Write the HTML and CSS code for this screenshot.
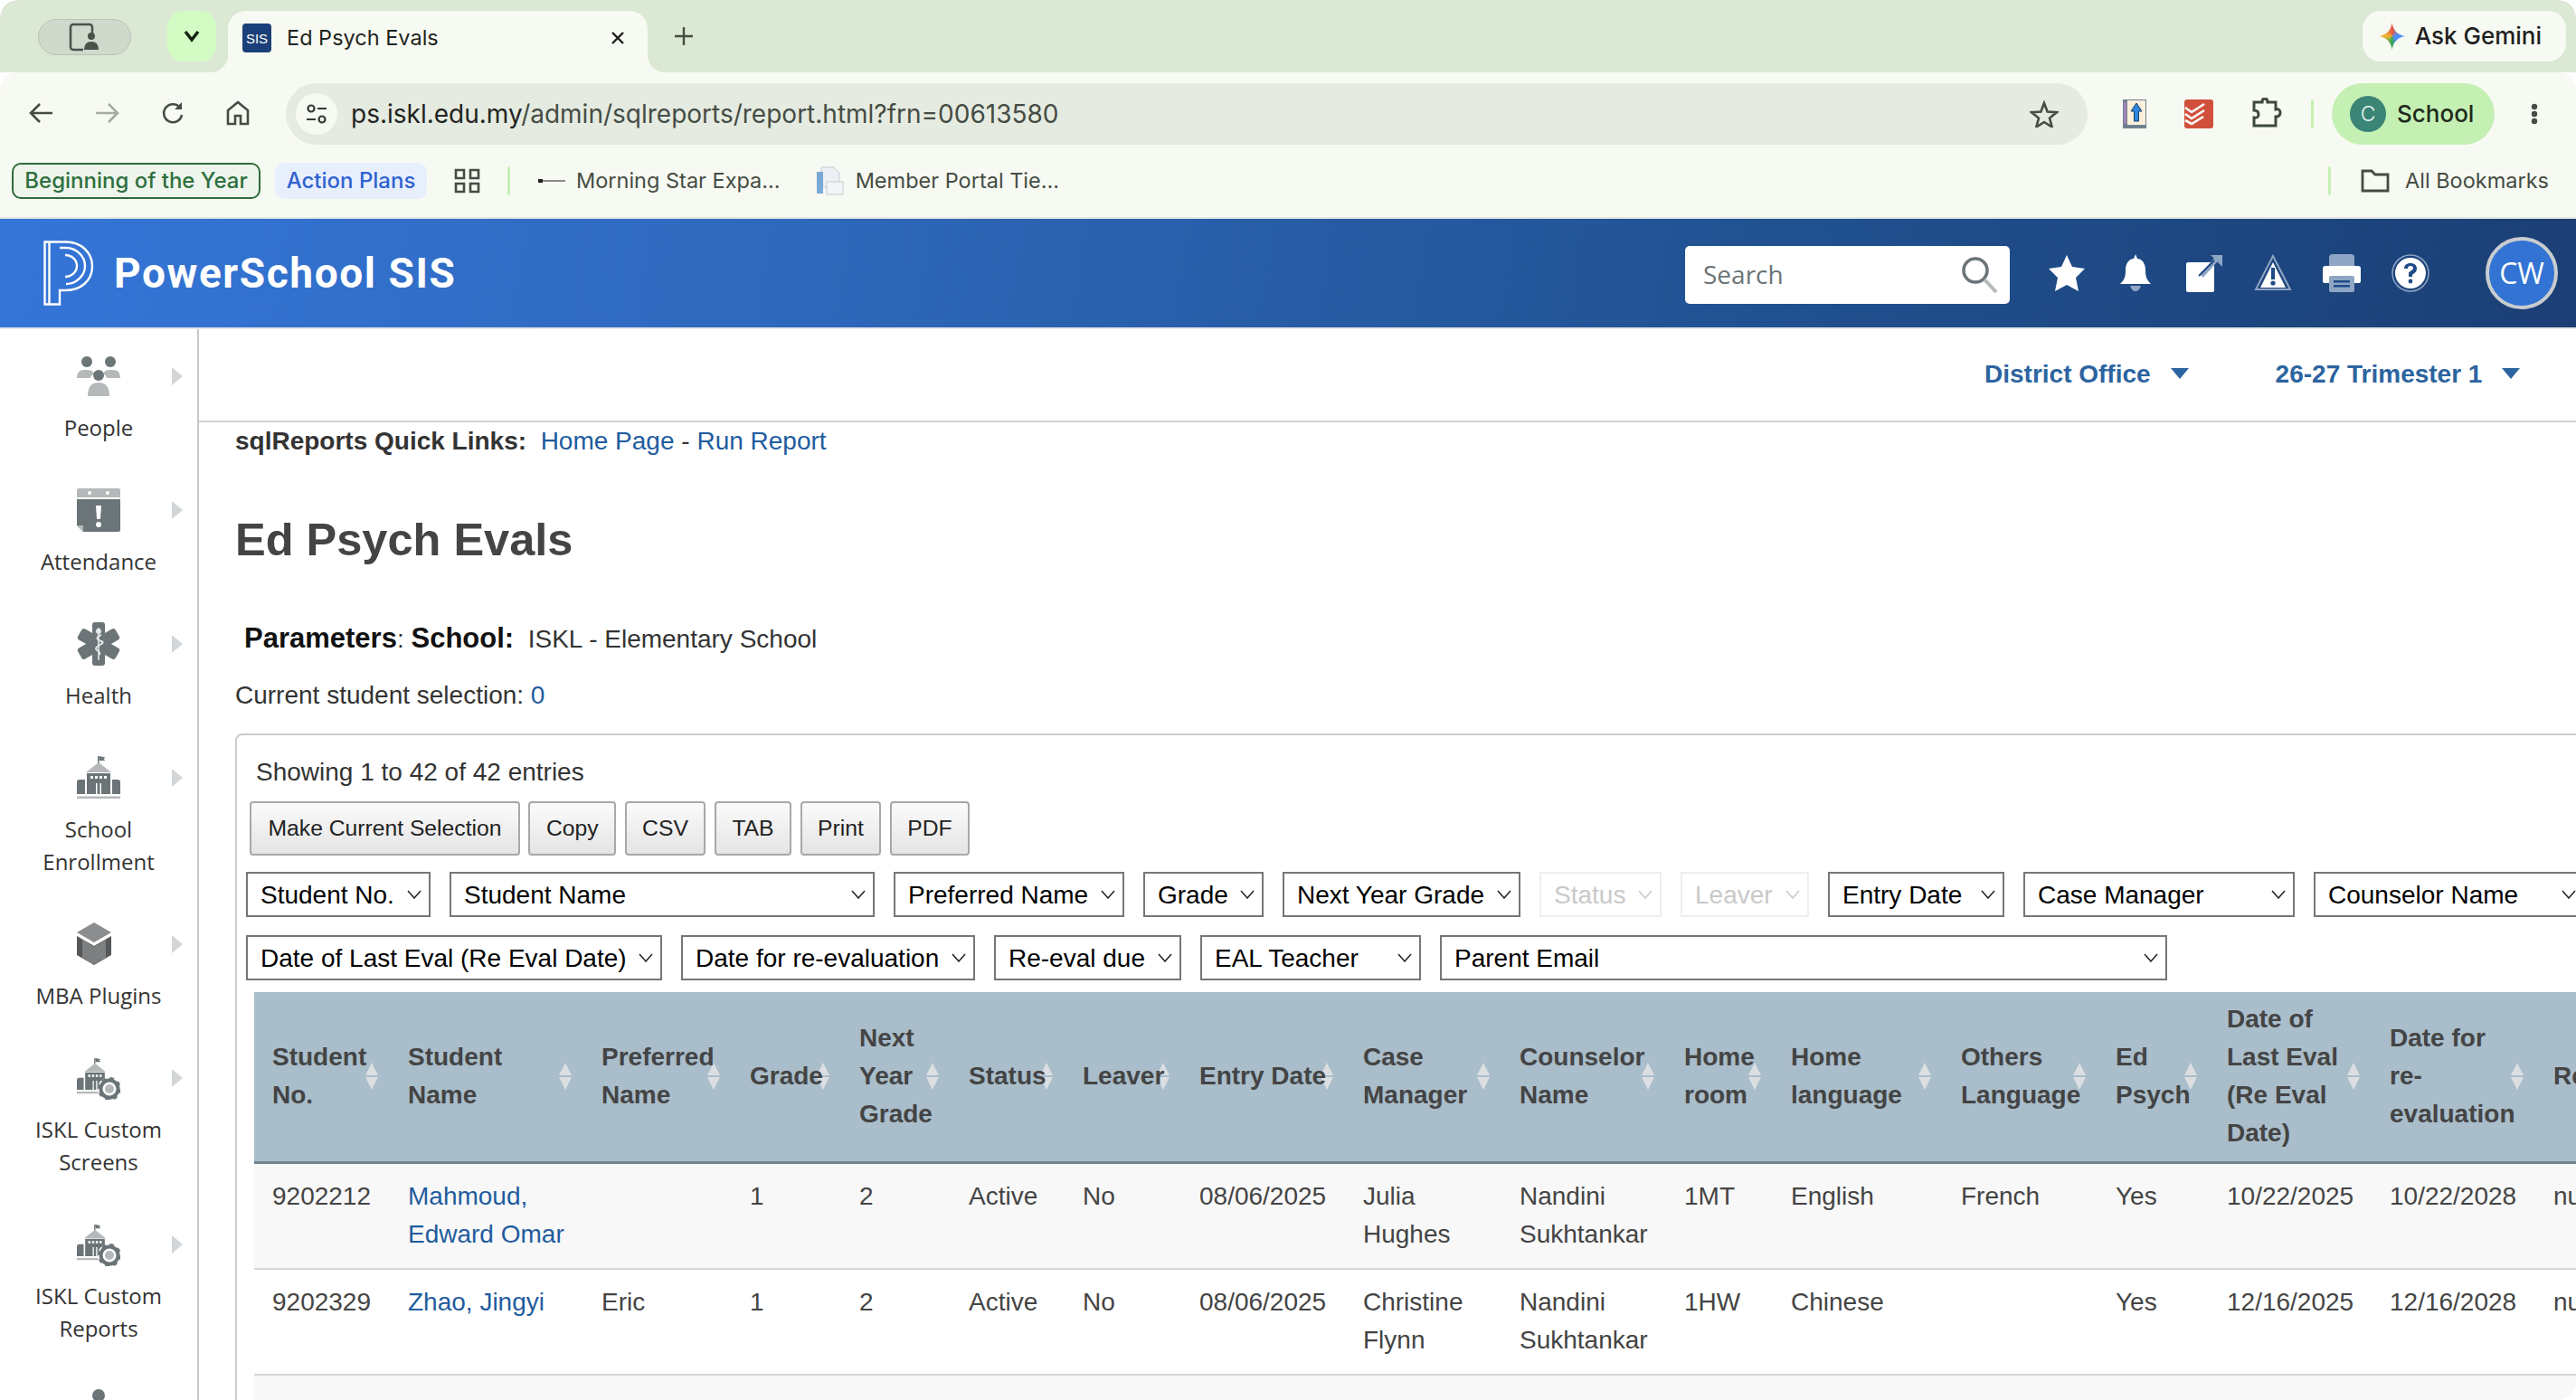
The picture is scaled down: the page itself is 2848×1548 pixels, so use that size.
FILE: index.html

```html
<!DOCTYPE html>
<html lang="en">
<head>
  <meta charset="UTF-8">
  <title>Ed Psych Evals</title>
  <link rel="stylesheet" href="styles.css">
</head>
<body>
<svg class="defs" width="0" height="0">
  <symbol id="school" viewBox="0 0 48 48">
    <path d="M23 0h1.500v8H23z" fill="#6b7477"/>
    <path d="M24.500 0l7 1.500-2 1.500 2 2h-7z" fill="#6b7477"/>
    <path d="M24 7l14 11H10z" fill="#b5b9ba"/>
    <path d="M11 19h26v23H27V30h-6v12H11z" fill="#6b7477"/>
    <path d="M15 22h3v3h-3zM20 22h3v3h-3zM25 22h3v3h-3zM30 22h3v3h-3z" fill="#fff"/>
    <path d="M22.500 29h3v13h-3z" fill="#6b7477"/>
    <path d="M3 26h6v16H0V29q0-3 3-3zM39 26h6q3 0 3 3v13h-9z" fill="#6b7477"/>
    <path d="M0 44.500h48V47H0z" fill="#b5b9ba"/>
  </symbol>
  <symbol id="school-gear" viewBox="0 0 48 48">
    <use href="#school" width="40" height="44" x="0" y="0"/>
    <circle cx="36" cy="36" r="13" fill="#fff"/>
    <circle cx="36" cy="36" r="9.500" fill="none" stroke="#6b7477" stroke-width="4"/>
    <circle cx="36" cy="36" r="11.500" fill="none" stroke="#6b7477" stroke-width="3" stroke-dasharray="4.500 4.530"/>
    <circle cx="36" cy="36" r="5" fill="#b5b9ba"/>
  </symbol>
</svg>

<div class="window">
  <div class="tabstrip">
    <div class="profile-pill">
      <svg width="36" height="32" viewBox="0 0 36 32"><rect x="2" y="2" width="24" height="28" rx="3" fill="none" stroke="#4a524a" stroke-width="2.500"/><rect x="16" y="14" width="18" height="18" fill="#d1d9cc"/><circle cx="25" cy="15" r="4" fill="#4a524a"/><path d="M17 30q0-9 8-9t8 9z" fill="#4a524a"/></svg>
    </div>
    <div class="tab-search">
      <svg width="18" height="14" viewBox="0 0 18 14"><path d="M2 2l7 9 7-9" fill="none" stroke="#14210f" stroke-width="3.500"/></svg>
    </div>
    <div class="tab">
      <span class="favicon">SIS</span>
      <span class="tab-title">Ed Psych Evals</span>
      <svg class="tab-close" width="18" height="18" viewBox="0 0 18 18"><path d="M3 3l12 12M15 3L3 15" stroke="#1c1f1a" stroke-width="2.400"/></svg>
    </div>
    <svg class="new-tab" width="22" height="22" viewBox="0 0 22 22"><path d="M11 1v20M1 11h20" stroke="#444c42" stroke-width="2.400"/></svg>
    <div class="gemini">
      <span class="gemini-star"></span>
      <span>Ask Gemini</span>
    </div>
  </div>

  <div class="toolbar">
    <svg class="nav-icon nav-back" width="28" height="24" viewBox="0 0 28 24"><path d="M13 2L3 12l10 10M3 12h24" fill="none" stroke="#454c44" stroke-width="2.600"/></svg>
    <svg class="nav-icon nav-fwd" width="28" height="24" viewBox="0 0 28 24"><path d="M15 2l10 10-10 10M25 12H1" fill="none" stroke="#a5aaa3" stroke-width="2.600"/></svg>
    <svg class="nav-icon nav-reload" width="26" height="26" viewBox="0 0 26 26"><path d="M21 7a10 10 0 1 0 2 8" fill="none" stroke="#454c44" stroke-width="2.600"/><path d="M23 1v8h-8z" fill="#454c44"/></svg>
    <svg class="nav-icon nav-home" width="26" height="28" viewBox="0 0 26 28"><path d="M13 2L2 11v15h8v-9h6v9h8V11z" fill="none" stroke="#454c44" stroke-width="2.600"/></svg>
    <div class="omnibox">
      <span class="site-info">
        <svg width="24" height="24" viewBox="0 0 24 24"><circle cx="6" cy="6" r="3.500" fill="none" stroke="#333a32" stroke-width="2.200"/><path d="M13 6h10M1 18h10" stroke="#333a32" stroke-width="2.200"/><circle cx="18" cy="18" r="3.500" fill="none" stroke="#333a32" stroke-width="2.200"/></svg>
      </span>
      <span class="url"><span class="url-host">ps.iskl.edu.my</span>/admin/sqlreports/report.html?frn=00613580</span>
      <svg class="omni-star" width="32" height="30" viewBox="0 0 32 30"><path d="M16 3l3.600 9.500 10.400.6-8 6.500 2.700 9.900L16 24l-8.700 5.500 2.700-9.900-8-6.500 10.400-.6z" fill="none" stroke="#454c44" stroke-width="2.600"/></svg>
    </div>
    <svg class="ext ext-first" width="26" height="32" viewBox="0 0 26 32"><rect x="0" y="0" width="26" height="32" fill="#6f8090"/><rect x="5" y="1" width="20" height="27" fill="#fdf0dc"/><path d="M1 3h3v24H1z" fill="#a186b8"/><path d="M15 4l6 9h-3.500v11h-5V13H9z" fill="#2f86e0" stroke="#1d3f66"/></svg>
    <svg class="ext ext-todo" width="32" height="32" viewBox="0 0 32 32"><rect width="32" height="32" rx="3" fill="#d1503c"/><path d="M1 12l7 5 14-9M1 19l7 5 14-9M1 26l7 4 13-8" transform="translate(0 -3)" fill="none" stroke="#fff" stroke-width="2.600"/></svg>
    <svg class="ext ext-puzzle" width="34" height="34" viewBox="0 0 34 34"><path d="M3 5h9q0-4 3-4t3 4h9v8q5-1 5 3.500T27 21v10H3v-9q5 1 5-3.500T3 14z" fill="none" stroke="#3f4a3e" stroke-width="3"/></svg>
    <span class="bar-divider toolbar-divider"></span>
    <div class="profile-chip">
      <span class="profile-c">C</span>
      <span>School</span>
    </div>
    <svg class="menu-dots" width="8" height="24" viewBox="0 0 8 24"><circle cx="4" cy="4" r="3.200" fill="#454c44"/><circle cx="4" cy="12" r="3.200" fill="#454c44"/><circle cx="4" cy="20" r="3.200" fill="#454c44"/></svg>
  </div>

  <div class="bookmarks">
    <span class="bm-group bm-green">Beginning of the Year</span>
    <span class="bm-group bm-blue">Action Plans</span>
    <svg class="bm-grid" width="29" height="28" viewBox="0 0 29 28"><path d="M2 2h9v9H2zM18 2h9v9h-9zM2 17h9v9H2zM18 17h9v9h-9z" fill="none" stroke="#454c44" stroke-width="2.600"/></svg>
    <span class="bar-divider bm-divider"></span>
    <svg class="bm-ms" width="30" height="6" viewBox="0 0 30 6"><path d="M0 3h30" stroke="#8a8a8a" stroke-width="2"/><path d="M0 1h5v4H0z" fill="#222"/></svg>
    <span class="bm-item">Morning Star Expa...</span>
    <svg class="bm-doc" width="32" height="32" viewBox="0 0 32 32"><path d="M6 1h14l6 6v16H6z" fill="#eceff3" stroke="#c5ccd4"/><path d="M1 6h7v24H1z" fill="#7aa9d8"/><path d="M12 17h18v14H12z" fill="#f3f4f6" stroke="#c5ccd4"/></svg>
    <span class="bm-item">Member Portal Tie...</span>
    <span class="bar-divider bm-divider-right"></span>
    <svg class="bm-folder" width="32" height="26" viewBox="0 0 32 26"><path d="M2 2h10l4 4h14v18H2z" fill="none" stroke="#454c44" stroke-width="2.800"/></svg>
    <span class="bm-item">All Bookmarks</span>
  </div>

  <header class="ps-header">
    <svg class="ps-logo" width="56" height="72" viewBox="0 0 56 72">
      <g fill="none" stroke="#fff" stroke-width="2.400">
        <path d="M1.500 1.500h5v69h-5zM6.500 1.500H25c16 0 29 11 29 27S41 55 25 55h-7v15.500H6.500"/>
        <path d="M18 8h7c11 0 21 9 21 20s-10 20-21 20"/>
        <path d="M24 16c7 0 13 5 13 12s-6 12-13 12"/>
      </g>
    </svg>
    <span class="ps-title">PowerSchool SIS</span>
    <div class="ps-search">
      <span>Search</span>
      <svg width="42" height="42" viewBox="0 0 42 42"><circle cx="16" cy="16" r="13" fill="none" stroke="#6b7477" stroke-width="3.600"/><path d="M26 26l13 14" stroke="#b5b9ba" stroke-width="4"/></svg>
    </div>
    <div class="ps-icons">
      <svg width="42" height="42" viewBox="0 0 42 42"><path d="M21 1l6 13 14 2-10 10 3 15-13-7-13 7 3-15L1 16l14-2z" fill="#fff"/></svg>
      <svg width="42" height="42" viewBox="0 0 42 42"><path d="M21 0l2 5c7 1 9 7 9 13 0 8 2 11 6 15H4c4-4 6-7 6-15 0-6 2-12 9-13z" fill="#fff"/><path d="M15 35h12q-2 6-6 6t-6-6z" fill="#8fa5c4"/></svg>
      <svg width="42" height="42" viewBox="0 0 42 42"><rect x="1" y="9" width="31" height="33" rx="2" fill="#fff"/><path d="M18 24L36 4" stroke="#8fa5c4" stroke-width="5"/><path d="M28 1h13v13z" fill="#8fa5c4"/><path d="M15 24L32 7" stroke="#1f4a87" stroke-width="2"/></svg>
      <svg width="42" height="42" viewBox="0 0 42 42"><path d="M21 2l19 37H2z" fill="none" stroke="#8fa5c4" stroke-width="2"/><path d="M21 9l14 28H7z" fill="#fff"/><path d="M19 15h4v13h-4z" fill="#1f4a87"/><circle cx="21" cy="32" r="2.600" fill="#1f4a87"/></svg>
      <svg width="42" height="42" viewBox="0 0 42 42"><rect x="7" y="0" width="28" height="42" rx="4" fill="#8fa5c4"/><path d="M3 13h36q3 0 3 3v14q0 2-3 2H3q-3 0-3-2V16q0-3 3-3z" fill="#fff"/><rect x="7" y="24" width="28" height="18" rx="2" fill="#8fa5c4"/><path d="M12 29h18v2.400H12zM12 34h18v2.400H12z" fill="#1f4a87"/></svg>
      <svg width="42" height="42" viewBox="0 0 42 42"><circle cx="21" cy="21" r="20" fill="none" stroke="#8fa5c4" stroke-width="1.500"/><circle cx="21" cy="21" r="17" fill="#fff"/><path d="M14 16c0-4 3-6 7-6s7 2 7 6-3 5-5 7v2h-4v-4c0-2 5-3 5-5.500 0-1.500-1-2.500-3-2.500s-3 1-3 3z" fill="#1f4a87"/><circle cx="21" cy="30" r="2.400" fill="#1f4a87"/></svg>
    </div>
    <div class="ps-avatar">CW</div>
  </header>

  <div class="app">
    <nav class="sidebar">
      <a class="nav-item nav-people">
        <svg width="48" height="44" viewBox="0 0 48 44"><path d="M0 24q0-9 8-9h4q5 0 7 4-4 3-4 5z" fill="#b5b9ba"/><path d="M48 24q0-9-8-9h-4q-5 0-7 4 4 3 4 5z" fill="#b5b9ba"/><path d="M12 44q0-15 12-15t12 15z" fill="#b5b9ba"/><circle cx="11" cy="6" r="6" fill="#6b7477"/><circle cx="37" cy="6" r="6" fill="#6b7477"/><circle cx="24" cy="21" r="6" fill="#6b7477"/></svg>
        <span>People</span>
      </a>
      <a class="nav-item">
        <svg width="48" height="48" viewBox="0 0 48 48"><path d="M2 0h44q2 0 2 2v8H0V2q0-2 2-2z" fill="#b5b9ba"/><circle cx="14" cy="5" r="2" fill="#fff"/><circle cx="34" cy="5" r="2" fill="#fff"/><path d="M0 12h48v34q0 2-2 2H7l-7-7z" fill="#6b7477"/><path d="M21 19h6l-1 15h-4z" fill="#fff"/><circle cx="24" cy="40" r="3" fill="#fff"/><path d="M0 41h7v7z" fill="#b5b9ba"/></svg>
        <span>Attendance</span>
      </a>
      <a class="nav-item">
        <svg width="48" height="48" viewBox="0 0 48 48"><g fill="#6b7477"><rect x="17" y="0" width="14" height="48" rx="3"/><rect x="17" y="0" width="14" height="48" rx="3" transform="rotate(60 24 24)"/><rect x="17" y="0" width="14" height="48" rx="3" transform="rotate(120 24 24)"/></g><path d="M24 6v36" stroke="#e4e6e7" stroke-width="1.600"/><path d="M27 14c-6 2-6 5 0 7s-6 5-6 8 6 3 4 7" fill="none" stroke="#e4e6e7" stroke-width="2"/><circle cx="24" cy="10" r="3" fill="#e4e6e7"/></svg>
        <span>Health</span>
      </a>
      <a class="nav-item">
        <svg width="48" height="48"><use href="#school"/></svg>
        <span>School<br>Enrollment</span>
      </a>
      <a class="nav-item">
        <svg width="48" height="48" viewBox="0 0 38 48" preserveAspectRatio="xMinYMid"><path d="M19 0l19 11-19 11L0 11z" fill="#8b8d8f"/><path d="M0 15l19 11 19-11v21L19 47 0 36z" fill="#555759"/><path d="M6 19l13 8 13-8v20l-13 8-13-8z" fill="#7d7f81"/></svg>
        <span>MBA Plugins</span>
      </a>
      <a class="nav-item">
        <svg width="48" height="48"><use href="#school-gear"/></svg>
        <span>ISKL Custom<br>Screens</span>
      </a>
      <a class="nav-item">
        <svg width="48" height="48"><use href="#school-gear"/></svg>
        <span>ISKL Custom<br>Reports</span>
      </a>
      <a class="nav-more">
        <svg width="14" height="14" viewBox="0 0 14 14"><circle cx="7" cy="7" r="7" fill="#6b7477"/></svg>
      </a>
    </nav>

    <main class="main">
      <div class="context-bar">
        <a class="context-link">District Office</a>
        <a class="context-link">26-27 Trimester 1</a>
      </div>

      <div class="content">
        <p class="quick-links"><strong>sqlReports Quick Links:</strong>&nbsp; <a>Home Page</a> - <a>Run Report</a></p>
        <h1>Ed Psych Evals</h1>
        <p class="params"><b>Parameters</b>: <b>School:</b>&nbsp; ISKL - Elementary School</p>
        <p class="selection">Current student selection: <a>0</a></p>

        <section class="report-box">
          <div class="info">Showing 1 to 42 of 42 entries</div>
          <div class="buttons">
            <button class="btn-wide">Make Current Selection</button>
            <button>Copy</button>
            <button>CSV</button>
            <button>TAB</button>
            <button>Print</button>
            <button>PDF</button>
          </div>
          <div class="filters">
            <select class="f-204"><option>Student No.</option></select>
            <select class="f-470"><option>Student Name</option></select>
            <select class="f-255"><option>Preferred Name</option></select>
            <select class="f-133"><option>Grade</option></select>
            <select class="f-263"><option>Next Year Grade</option></select>
            <select class="f-135" disabled><option>Status</option></select>
            <select class="f-142" disabled><option>Leaver</option></select>
            <select class="f-195"><option>Entry Date</option></select>
            <select class="f-300"><option>Case Manager</option></select>
            <select class="f-300"><option>Counselor Name</option></select>
          </div>
          <div class="filters">
            <select class="f-460"><option>Date of Last Eval (Re Eval Date)</option></select>
            <select class="f-325"><option>Date for re-evaluation</option></select>
            <select class="f-207"><option>Re-eval due</option></select>
            <select class="f-244"><option>EAL Teacher</option></select>
            <select class="f-804"><option>Parent Email</option></select>
          </div>

          <table class="report">
            <colgroup>
              <col class="c1"><col class="c2"><col class="c3"><col class="c4"><col class="c5"><col class="c6"><col class="c7"><col class="c8"><col class="c9">
              <col class="c10"><col class="c11"><col class="c12"><col class="c13"><col class="c14"><col class="c15"><col class="c16"><col class="c17">
            </colgroup>
            <thead>
              <tr>
                <th>Student No.</th><th>Student Name</th><th>Preferred Name</th><th>Grade</th><th>Next Year Grade</th><th>Status</th><th>Leaver</th><th>Entry Date</th>
                <th>Case Manager</th><th>Counselor Name</th><th>Home room</th><th>Home language</th><th>Others Language</th><th>Ed Psych</th>
                <th>Date of Last Eval (Re Eval Date)</th><th>Date for re-evaluation</th><th>Re-eval due</th>
              </tr>
            </thead>
            <tbody>
              <tr class="odd">
                <td>9202212</td><td><a>Mahmoud, Edward Omar</a></td><td></td><td>1</td><td>2</td><td>Active</td><td>No</td><td>08/06/2025</td>
                <td>Julia Hughes</td><td>Nandini Sukhtankar</td><td>1MT</td><td>English</td><td>French</td><td>Yes</td><td>10/22/2025</td><td>10/22/2028</td><td>null</td>
              </tr>
              <tr>
                <td>9202329</td><td><a>Zhao, Jingyi</a></td><td>Eric</td><td>1</td><td>2</td><td>Active</td><td>No</td><td>08/06/2025</td>
                <td>Christine Flynn</td><td>Nandini Sukhtankar</td><td>1HW</td><td>Chinese</td><td></td><td>Yes</td><td>12/16/2025</td><td>12/16/2028</td><td>null</td>
              </tr>
              <tr class="odd">
                <td colspan="17">&nbsp;</td>
              </tr>
            </tbody>
          </table>
        </section>
      </div>
    </main>
  </div>
</div>
</body>
</html>
```

FILE: styles.css

```css
* {
  box-sizing: border-box;
}

html, body {
  margin: 0;
  height: 100%;
  background: #fff;
  overflow: hidden;
}

body {
  font-family: "Liberation Sans", Arial, sans-serif;
  font-size: 28px;
  line-height: 42px;
  color: #333;
}

.defs {
  position: absolute;
}

svg {
  display: block;
  flex: none;
}

.window {
  width: 2848px;
  height: 1548px;
  display: flex;
  flex-direction: column;
  border-radius: 20px;
  overflow: hidden;
  background: #fff;
}

/* browser chrome */
.tabstrip {
  height: 80px;
  flex: none;
  display: flex;
  align-items: flex-start;
  background: #dbe8d3;
  font-family: Inter, "Liberation Sans", sans-serif;
}

.profile-pill {
  width: 103px;
  height: 40px;
  margin: 21px 0 0 42px;
  display: flex;
  align-items: center;
  justify-content: center;
  background: #d1d9cc;
  border: 1px solid #b9c2b5;
  border-radius: 20px;
}

.tab-search {
  width: 54px;
  height: 56px;
  margin: 12px 0 0 40px;
  display: flex;
  align-items: center;
  justify-content: center;
  background: #d3fcc4;
  border-radius: 18px;
}

.tab {
  position: relative;
  width: 464px;
  height: 68px;
  margin: 12px 0 0 13px;
  padding: 0 24px 0 16px;
  display: flex;
  align-items: center;
  background: #f7faf2;
  border-radius: 20px 20px 0 0;
}

.tab::before,
.tab::after {
  content: "";
  position: absolute;
  bottom: 0;
  width: 20px;
  height: 20px;
}

.tab::before {
  left: -20px;
  background: radial-gradient(circle at 0 0, transparent 20px, #f7faf2 20.500px);
}

.tab::after {
  right: -20px;
  background: radial-gradient(circle at 100% 0, transparent 20px, #f7faf2 20.500px);
}

.favicon {
  width: 32px;
  height: 32px;
  margin-top: -8px;
  display: flex;
  align-items: center;
  justify-content: center;
  background: #1b3f78;
  border-radius: 4px;
  color: #fff;
  font-family: "Liberation Sans", sans-serif;
  font-size: 15px;
  line-height: 1;
}

.tab-title {
  margin: -8px 0 0 17px;
  font-size: 23.500px;
  line-height: 40px;
  color: #1f2420;
}

.tab-close {
  margin: -8px 0 0 auto;
}

.new-tab {
  margin: 29px 0 0 29px;
}

.gemini {
  height: 56px;
  margin: 12px 11px 0 auto;
  padding: 0 27px 0 17px;
  display: flex;
  align-items: center;
  gap: 9px;
  background: #f7faf2;
  border-radius: 20px;
  font-size: 26px;
  font-weight: 500;
  color: #1f1f1f;
}

.gemini-star {
  width: 32px;
  height: 32px;
  background: conic-gradient(#e8584a, #4f8ef7 22%, #4f8ef7 36%, #34a853 52%, #f2b632 75%, #e8584a);
  clip-path: path("M16 1C17 9 22 15 31 16 22 17 17 23 16 31 15 23 10 17 1 16 10 15 15 9 16 1Z");
}

.toolbar {
  height: 92px;
  flex: none;
  padding: 12px 0 0 31px;
  display: flex;
  align-items: flex-start;
  background: #f7faf2;
  border-radius: 20px 20px 0 0;
  font-family: Inter, "Liberation Sans", sans-serif;
}

.nav-icon {
  margin-top: 21px;
}

.nav-back { margin-left: 0; }
.nav-fwd { margin-left: 46px; }
.nav-reload { margin-left: 45px; margin-top: 20px; }
.nav-home { margin-left: 46px; margin-top: 19px; }

.omnibox {
  width: 1992px;
  height: 68px;
  margin-left: 40px;
  padding: 0 32px 0 11px;
  display: flex;
  align-items: center;
  background: #e5ebe0;
  border-radius: 34px;
}

.site-info {
  width: 46px;
  height: 46px;
  display: flex;
  align-items: center;
  justify-content: center;
  background: #f7faf2;
  border-radius: 50%;
}

.url {
  margin-left: 15px;
  font-size: 28px;
  color: #454c44;
}

.url-host {
  color: #1f2420;
}

.omni-star {
  margin-left: auto;
}

.ext {
  margin: 18px 0 0 39px;
}

.ext-todo {
  margin-left: 42px;
}

.ext-puzzle {
  margin: 16px 0 0 42px;
}

.bar-divider {
  display: block;
  width: 3px;
  height: 32px;
  background: #c4f0b4;
  border-radius: 2px;
}

.toolbar-divider {
  margin: 18px 0 0 32px;
}

.profile-chip {
  width: 180px;
  height: 68px;
  margin-left: 20px;
  padding-left: 20px;
  display: flex;
  align-items: center;
  gap: 12px;
  background: #c4f0b4;
  border-radius: 34px;
  font-size: 26px;
  font-weight: 500;
  color: #1f2a1c;
}

.profile-c {
  width: 40px;
  height: 40px;
  display: flex;
  align-items: center;
  justify-content: center;
  background: #3b8577;
  border-radius: 50%;
  color: #e8f5ee;
  font-size: 23px;
  font-weight: 300;
}

.menu-dots {
  margin: 22px 0 0 40px;
}

.bookmarks {
  height: 68px;
  flex: none;
  padding: 8px 0 0 13px;
  display: flex;
  align-items: flex-start;
  background: #f7faf2;
  font-family: Inter, "Liberation Sans", sans-serif;
  font-size: 23.500px;
}

.bm-group {
  height: 40px;
  display: flex;
  align-items: center;
  justify-content: center;
  font-weight: 500;
  line-height: 1;
  font-size: 24px;
}

.bm-green {
  width: 275px;
  background: #eef5ec;
  border: 2px solid #2e6b3a;
  border-radius: 10px;
  color: #2e6f3e;
}

.bm-blue {
  width: 168px;
  margin-left: 16px;
  background: #e8effc;
  border-radius: 10px;
  color: #2f62d0;
}

.bm-grid {
  margin: 6px 0 0 30px;
}

.bm-divider {
  margin: 4px 0 0 30px;
}

.bm-ms {
  margin: 17px 0 0 31px;
}

.bm-item {
  height: 40px;
  line-height: 40px;
  color: #454c44;
  white-space: nowrap;
}

.bm-ms + .bm-item {
  margin-left: 12px;
}

.bm-doc {
  margin: 4px 0 0 39px;
}

.bm-doc + .bm-item {
  margin-left: 12px;
}

.bm-divider-right {
  margin: 4px 0 0 auto;
}

.bm-folder {
  margin: 7px 0 0 33px;
}

.bm-folder + .bm-item {
  margin: 0 30px 0 17px;
}

/* powerschool header */
.ps-header {
  height: 124px;
  flex: none;
  padding: 0 20px 0 48px;
  display: flex;
  align-items: center;
  background: linear-gradient(100deg, #3475d8 0%, #2f69bd 30%, #20508f 70%, #1b3f75 100%);
  border-top: 2px solid #e3e6e0;
  border-bottom: 2px solid #e6e6e6;
  font-family: "Open Sans", sans-serif;
}

.ps-title {
  margin-left: 22px;
  font-family: Roboto, sans-serif;
  font-size: 46px;
  font-weight: 700;
  letter-spacing: 1.600px;
  color: #fff;
}

.ps-search {
  width: 359px;
  height: 64px;
  margin: 4px 0 0 auto;
  padding: 0 12px 0 20px;
  display: flex;
  align-items: center;
  justify-content: space-between;
  background: #fff;
  border-radius: 5px;
  font-size: 28px;
  color: #6b7477;
}

.ps-search span {
  margin-top: -2px;
}

.ps-icons {
  margin-left: 42px;
  display: flex;
  align-items: center;
  gap: 34px;
}

.ps-avatar {
  width: 80px;
  height: 80px;
  margin-left: 62px;
  display: flex;
  align-items: center;
  justify-content: center;
  background: #3273d3;
  border: 4px solid #c9cccf;
  border-radius: 50%;
  font-size: 32px;
  color: #fff;
}

/* sidebar */
.app {
  flex: 1;
  min-height: 0;
  display: flex;
}

.sidebar {
  width: 220px;
  flex: none;
  padding-top: 28px;
  border-right: 2px solid #c8c8c8;
  font-family: "Open Sans", sans-serif;
  font-size: 24px;
  line-height: 36px;
  color: #333;
}

.nav-item {
  position: relative;
  display: flex;
  flex-direction: column;
  align-items: center;
  padding-bottom: 49px;
  text-align: center;
}

.nav-item span {
  margin-top: 15px;
}

.nav-item::after {
  content: "";
  position: absolute;
  left: 190px;
  top: 14px;
  border-left: 12px solid #d2d6d8;
  border-top: 10px solid transparent;
  border-bottom: 10px solid transparent;
}

.nav-people svg {
  margin: 2px 0;
}

.nav-more {
  display: flex;
  justify-content: center;
}

/* main */
.main {
  flex: 1;
  min-width: 0;
  overflow: hidden;
}

.context-bar {
  height: 103px;
  padding: 29px 0 0 1974px;
  display: flex;
  align-items: flex-start;
  border-bottom: 2px solid #d3d3d3;
}

.context-link {
  display: flex;
  font-weight: 700;
  color: #2c64a0;
  white-space: nowrap;
}

.context-link::after {
  content: "";
  align-self: center;
  margin: -2px 0 0 22px;
  border-top: 12px solid #2c64a0;
  border-left: 10.500px solid transparent;
  border-right: 10.500px solid transparent;
}

.context-link + .context-link {
  margin-left: 96px;
}

.content {
  padding: 0 0 0 40px;
}

.content a,
.report a {
  color: #1f5c9e;
}

.quick-links {
  margin: 0;
}

.quick-links strong {
  color: #333;
}

h1 {
  margin: 58px 0 0;
  font-size: 50.500px;
  line-height: 60px;
  font-weight: 700;
  color: #444;
}

.params {
  margin: 58px 0 0 10px;
  color: #333;
}

.params b {
  font-size: 31px;
  color: #111;
}

.selection {
  margin: 20px 0 0;
}

.report-box {
  width: 2700px;
  margin-top: 21px;
  padding: 20px 0 0 10px;
  border: 2px solid #ccc;
  border-radius: 8px;
}

.info {
  padding-left: 11px;
}

.buttons {
  margin-top: 11px;
  display: flex;
  gap: 9.500px;
  padding-left: 4px;
}

button {
  height: 60px;
  padding: 0 17.500px;
  background: linear-gradient(#fbfbfb, #e4e4e4);
  border: 2px solid #a8a8a8;
  border-radius: 4px;
  font-family: inherit;
  font-size: 24.700px;
  color: #222;
}

.btn-wide {
  padding: 0 18.500px;
}

.filters {
  margin-top: 20px;
  display: flex;
  gap: 21px;
}

.buttons + .filters {
  margin-top: 18px;
}

select {
  height: 50px;
  padding: 0 30px 0 14px;
  appearance: none;
  background: #fff url("data:image/svg+xml,%3Csvg xmlns='http://www.w3.org/2000/svg' width='16' height='10'%3E%3Cpath d='M1 1l7 8 7-8' fill='none' stroke='%23222' stroke-width='1.500'/%3E%3C/svg%3E") no-repeat right 8px center;
  border: 2px solid #767676;
  border-radius: 0;
  font-family: inherit;
  font-size: 28px;
  color: #000;
  flex: none;
}

select:disabled {
  opacity: 1;
  color: #c9c9c9;
  border-color: #eee;
  background-image: url("data:image/svg+xml,%3Csvg xmlns='http://www.w3.org/2000/svg' width='16' height='10'%3E%3Cpath d='M1 1l7 8 7-8' fill='none' stroke='%23c9c9c9' stroke-width='1.500'/%3E%3C/svg%3E");
}

.f-133 { width: 133px; }
.f-135 { width: 135px; }
.f-142 { width: 142px; }
.f-195 { width: 195px; }
.f-204 { width: 204px; }
.f-207 { width: 207px; }
.f-244 { width: 244px; }
.f-255 { width: 255px; }
.f-263 { width: 263px; }
.f-300 { width: 300px; }
.f-325 { width: 325px; }
.f-460 { width: 460px; }
.f-470 { width: 470px; }
.f-804 { width: 804px; }

.report {
  margin: 13px 0 0 9px;
  width: 2722px;
  table-layout: fixed;
  border-collapse: collapse;
}

.c1 { width: 150px; }
.c2 { width: 214px; }
.c3 { width: 164px; }
.c4 { width: 121px; }
.c5 { width: 121px; }
.c6 { width: 126px; }
.c7 { width: 129px; }
.c8 { width: 181px; }
.c9 { width: 173px; }
.c10 { width: 182px; }
.c11 { width: 118px; }
.c12 { width: 188px; }
.c13 { width: 171px; }
.c14 { width: 123px; }
.c15 { width: 180px; }
.c16 { width: 181px; }
.c17 { width: 200px; }

.report th {
  height: 188px;
  padding: 0 20px;
  text-align: left;
  vertical-align: middle;
  font-weight: 700;
  color: #444;
  background: #a9bdca url("data:image/svg+xml,%3Csvg xmlns='http://www.w3.org/2000/svg' width='16' height='30'%3E%3Cpath d='M8 0l7 14H1zM1 16h14l-7 14z' fill='%23dcdfe2'/%3E%3C/svg%3E") no-repeat right 12px center;
  border-bottom: 3px solid #6f8290;
}

.report td {
  padding: 15px 20px 16px;
  vertical-align: top;
  color: #444;
  border-bottom: 2px solid #d6d6d6;
}

.report .odd td {
  background: #f8f8f8;
}
```
